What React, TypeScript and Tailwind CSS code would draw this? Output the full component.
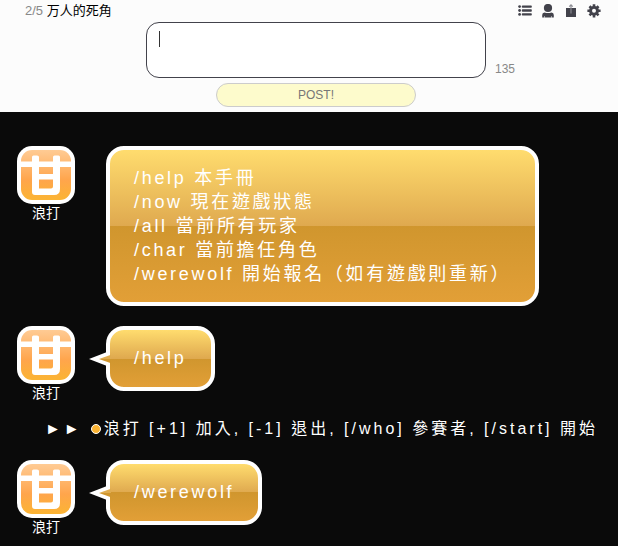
import type { ReactNode } from "react";

function ListIcon() {
  return (
    <svg viewBox="0 0 14 14" className="size-[14px] fill-[#42424b]" aria-hidden="true">
      <circle cx="1.6" cy="2.6" r="1.4" />
      <circle cx="1.6" cy="6.5" r="1.4" />
      <circle cx="1.6" cy="10.4" r="1.4" />
      <rect x="3.8" y="1.4" width="10" height="2.4" rx="0.8" />
      <rect x="3.8" y="5.3" width="10" height="2.4" rx="0.8" />
      <rect x="3.8" y="9.2" width="10" height="2.4" rx="0.8" />
    </svg>
  );
}

function UserIcon() {
  return (
    <svg viewBox="0 0 14 14" className="size-[14px] fill-[#42424b]" aria-hidden="true">
      <circle cx="7" cy="4" r="4.100" />
      <path d="M1.200 13.400V11Q1.200 8.700 3.500 8.600Q7 9.600 10.500 8.600Q12.800 8.700 12.800 11V13.400H10.900V12H10.400V13.400H3.600V12H3.100V13.400Z" />
    </svg>
  );
}

function ShareIcon() {
  return (
    <svg viewBox="0 0 14 14" className="size-[14px]" aria-hidden="true">
      <path d="M2 4H12V13H2Z" fill="#42424b" />
      <path d="M7 9.5V1M5.2 2.6L7 0.8L8.8 2.6" fill="none" stroke="#8d8d94" strokeWidth="1.1" />
    </svg>
  );
}

function GearIcon() {
  return (
    <svg viewBox="0 0 14 14" className="size-[14px]" aria-hidden="true">
      <g fill="#42424b">
        <circle cx="7" cy="6.8" r="4.9" />
        <path d="M5.7 0.2h2.6v13.2H5.7zM0.4 5.5h13.2v2.6H0.4z" />
        <path d="M5.7 0.4h2.6v12.8H5.7zM0.6 5.5h12.8v2.6H0.6z" transform="rotate(45 7 6.8)" />
      </g>
      <circle cx="7" cy="6.8" r="2" fill="#fcfcfc" />
    </svg>
  );
}

function Avatar() {
  return (
    <svg viewBox="0 0 58 58" className="size-[58px]" role="img" aria-label="浪打">
      <defs>
        <linearGradient id="avatar-fill" x1="0" y1="0" x2="0" y2="1">
          <stop offset="0" stopColor="#ffcb94" />
          <stop offset="0.6" stopColor="#ffa54c" />
          <stop offset="1" stopColor="#fbb433" />
        </linearGradient>
      </defs>
      <rect width="58" height="58" rx="15" fill="#fff" />
      <rect x="4" y="4" width="50" height="50" rx="11" fill="url(#avatar-fill)" />
      <path
        fill="#fff"
        fillRule="evenodd"
        d="M4 15.500H15V11Q15 9.500 16.500 9.500H20Q22 9.500 22 11V15.500H36V11Q36 9.500 37.500 9.500H41.500Q43 9.500 43 11V15.500H54V21H43V43Q43 49 37 49H18Q15 49 15 46V21H4ZM22 21V28H36V21ZM22 33.500V42.500H34Q36 42.500 36 40.500V33.500Z"
      />
    </svg>
  );
}

function Tail() {
  return (
    <svg viewBox="0 0 22 16" className="absolute top-[21px] -left-[21px] h-[16px] w-[22px]" aria-hidden="true">
      <path d="M0 8L18 1V15Z" fill="#fff" />
      <path d="M10 8L22 3.800V8Z" fill="#dfac50" />
      <path d="M10 8H22V12.200Z" fill="#d0962e" />
    </svg>
  );
}

function Talk({ tail = false, children }: { tail?: boolean; children: ReactNode }) {
  return (
    <article className="flex items-start gap-[31px]">
      <div className="flex w-[58px] shrink-0 flex-col items-center">
        <Avatar />
        <span className="text-sm leading-[18px]">浪打</span>
      </div>
      <div className="relative min-h-[65px] rounded-[18px] border-4 border-white bg-[linear-gradient(#ffdc6e_0%,#dfa94f_50%,#d0962e_50%,#e29f37_100%)] px-6 py-4 text-lg leading-6 tracking-[0.15em]">
        {tail && <Tail />}
        {children}
      </div>
    </article>
  );
}

const commands = [
  "/help 本手冊",
  "/now 現在遊戲狀態",
  "/all 當前所有玩家",
  "/char 當前擔任角色",
  "/werewolf 開始報名（如有遊戲則重新）",
];

const menu = [
  { label: "List", icon: <ListIcon /> },
  { label: "Members", icon: <UserIcon /> },
  { label: "Share", icon: <ShareIcon /> },
  { label: "Settings", icon: <GearIcon /> },
];

export default function App() {
  return (
    <div className="min-h-screen bg-[#0a0a0a] font-['Liberation_Sans','Noto_Sans_CJK_TC',sans-serif] text-white">
      <header className="grid grid-cols-[1fr_340px_1fr] bg-[#fcfcfc] pb-[5px] pl-[14px] text-xs text-[#888]">
        <h1 className="pt-[3px] pl-[11px] text-[13px] leading-4 whitespace-nowrap">
          2/5 <span className="text-black">万人的死角</span>
        </h1>
        <form className="flex flex-col items-center gap-[5px] pt-[22px]" onSubmit={(e) => e.preventDefault()}>
          <div className="relative w-full">
            <textarea
              aria-label="Message"
              className="block h-14 w-full resize-none rounded-[13px] border border-[#42424b] bg-white px-3 py-2 text-sm text-black caret-transparent outline-none"
            />
            <span className="absolute top-[9px] left-[13px] h-4 w-px bg-[#333]" />
          </div>
          <button type="submit" className="h-6 w-[200px] rounded-full border border-[#ccc] bg-[#fdfbcc] text-xs text-[#777]">
            POST!
          </button>
        </form>
        <div className="flex flex-col justify-between pt-[4px] pr-[17px] pb-[30px]">
          <nav className="flex justify-end gap-[9px]">
            {menu.map((item) => (
              <button key={item.label} type="button" aria-label={item.label}>
                {item.icon}
              </button>
            ))}
          </nav>
          <span className="pl-[9px] leading-4">135</span>
        </div>
      </header>

      <main className="flex flex-col px-[17px] pt-[34px]">
        <Talk>
          {commands.map((line) => (
            <p key={line}>{line}</p>
          ))}
        </Talk>
        <div className="pt-5">
          <Talk tail>/help</Talk>
        </div>
        <p className="flex items-center pt-[15px] pb-[19px] pl-7 text-base leading-6 tracking-[3px] whitespace-nowrap">
          <span>►►</span>
          <span className="mr-[3px] ml-2 size-[10px] shrink-0 rounded-full border border-white bg-[#fbb433]" />
          <span>浪打 [+1] 加入, [-1] 退出, [/who] 參賽者, [/start] 開始</span>
        </p>
        <Talk tail>/werewolf</Talk>
      </main>
    </div>
  );
}
